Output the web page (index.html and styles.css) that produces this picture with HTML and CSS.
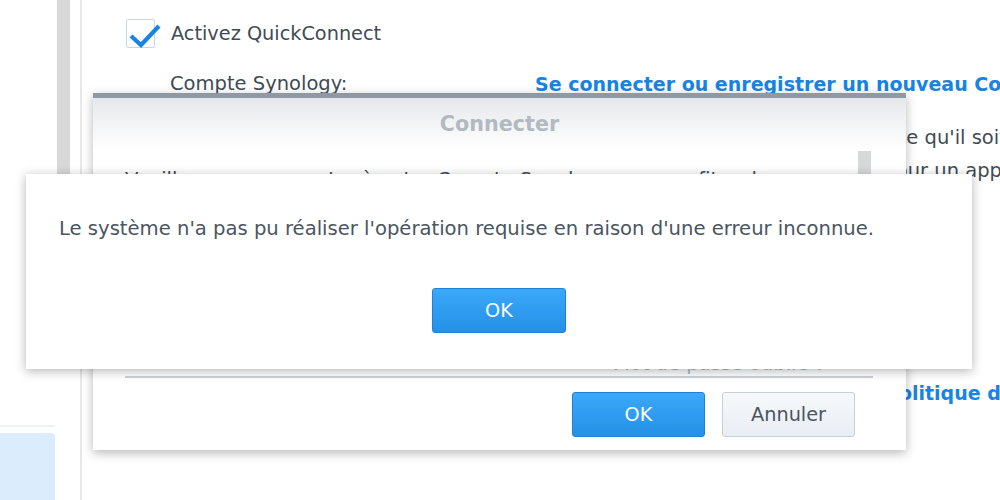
FILE: index.html
```html
<!DOCTYPE html>
<html lang="fr">
<head>
<meta charset="utf-8">
<title>QuickConnect</title>
<link rel="stylesheet" href="styles.css">
</head>
<body>
<div class="app">
  <aside class="sidebar">
    <div class="sb-space"></div>
    <div class="sb-sep"></div>
    <div class="sb-item"></div>
  </aside>
  <div class="track"><div class="thumb"></div></div>
  <div class="divider"></div>
  <main class="main">
    <div class="check-row">
      <span class="checkbox">
        <svg class="check" viewBox="0 0 32 26" width="32" height="26"><path d="M2 12 L12 21 L30 2" fill="none" stroke="#1a84e4" stroke-width="4.2" stroke-linejoin="miter"/></svg>
      </span>
      <span class="check-label">Activez QuickConnect</span>
    </div>
    <div class="field-row">
      <span class="field-label">Compte Synology:</span>
      <div class="field-value">
        <a class="link">Se connecter ou enregistrer un nouveau Compte Synology</a>
        <p class="desc first">Configurez votre Synology NAS de sorte qu'il soit</p>
        <p class="desc">accessible à distance, par exemple pour un appareil mobile.</p>
        <p class="policy"><a class="link">Conditions d'utilisation du site et Politique de confidentialité</a></p>
      </div>
    </div>
  </main>
</div>

<div class="dlg connect">
  <div class="dlg-head">Connecter</div>
  <div class="dlg-body">
    <div class="pane">
      <p class="pane-text">Veuillez vous connecter à votre Compte Synology pour profiter de QuickConnect.</p>
      <div class="pane-scroll"></div>
      <p class="pane-link">Mot de passe oublié ?</p>
    </div>
  </div>
  <div class="dlg-foot">
    <button class="btn btn-primary">OK</button>
    <button class="btn btn-default">Annuler</button>
  </div>
</div>

<div class="dlg alert">
  <p class="alert-msg">Le système n'a pas pu réaliser l'opération requise en raison d'une erreur inconnue.</p>
  <div class="alert-foot">
    <button class="btn btn-primary">OK</button>
  </div>
</div>
</body>
</html>
```
FILE: styles.css
```css
* { box-sizing: border-box; }
html, body { margin: 0; padding: 0; }
body {
  width: 1000px;
  height: 500px;
  overflow: hidden;
  background: #fff;
  font-family: "DejaVu Sans", Verdana, sans-serif;
  color: #414b55;
  position: relative;
}
.app {
  display: flex;
  height: 500px;
}
.sidebar {
  width: 55px;
  display: flex;
  flex-direction: column;
  flex: none;
}
.sb-space { height: 425px; }
.sb-sep { height: 2px; background: #edf2f7; }
.sb-item {
  margin-top: 6px;
  flex: 1;
  background: #dbedfc;
  border-top-right-radius: 4px;
}
.track {
  width: 13px;
  margin-left: 2px;
  flex: none;
}
.thumb {
  height: 330px;
  background: #d8d8d8;
}
.divider {
  width: 2px;
  margin-left: 10px;
  background: #e8e8e8;
  flex: none;
}
.main {
  flex: 1;
  padding: 19px 0 0 44px;
  overflow: hidden;
}
.check-row {
  display: flex;
  align-items: center;
  height: 29px;
}
.checkbox {
  position: relative;
  width: 29px;
  height: 29px;
  border: 1px solid #c9d6e3;
  border-radius: 2px;
  flex: none;
}
.check {
  position: absolute;
  left: 2px;
  top: 4px;
}
.check-label {
  margin-left: 16px;
  font-size: 19.3px;
  white-space: nowrap;
}
.field-row {
  display: flex;
  margin-top: 24px;
  margin-left: 44px;
}
.field-label {
  width: 365px;
  flex: none;
  font-size: 19.5px;
  line-height: 24px;
}
.field-value {
  white-space: nowrap;
}
.link {
  color: #1684e4;
  font-weight: bold;
  font-size: 19px;
  line-height: 24px;
}
.desc {
  margin: 0;
  font-size: 19.5px;
  line-height: 33px;
}
.desc.first {
  margin-top: 24.5px;
  text-indent: -7px;
}
.policy {
  margin: 194.5px 0 0;
  line-height: 24px;
  text-indent: -14px;
}

.dlg {
  position: absolute;
  background: #fff;
}
.connect {
  left: 93px;
  top: 93px;
  width: 813px;
  height: 357px;
  border-top: 5px solid #8e99a4;
  box-shadow: 0 3px 10px rgba(0, 0, 0, 0.28);
  display: flex;
  flex-direction: column;
}
.dlg-head {
  height: 52px;
  flex: none;
  background: linear-gradient(#e5e8ec, #ffffff);
  text-align: center;
  font-weight: bold;
  font-size: 20.7px;
  line-height: 52px;
  color: #b2b9c1;
}
.dlg-body {
  flex: 1;
  padding: 0 33px 0 32px;
}
.pane {
  position: relative;
  height: 228px;
  border-bottom: 2px solid #cdd0d4;
  overflow: hidden;
}
.pane-text {
  margin: 16px 0 0;
  width: 700px;
  font-size: 19.5px;
  line-height: 28px;
}
.pane-scroll {
  position: absolute;
  right: 2px;
  top: 1px;
  width: 13px;
  height: 60px;
  background: #d6d8da;
}
.pane-link {
  position: absolute;
  left: 488px;
  bottom: 1px;
  margin: 0;
  font-size: 19.5px;
  color: #a9bccf;
}
.dlg-foot {
  display: flex;
  justify-content: flex-end;
  gap: 17px;
  padding: 14px 51px 13px 0;
}
.btn {
  width: 133px;
  height: 45px;
  border-radius: 3px;
  font-family: "DejaVu Sans", Verdana, sans-serif;
  font-size: 19.3px;
  padding: 0;
}
.btn-primary {
  background: linear-gradient(#3ba8f9, #2490e8);
  border: 1px solid #1f82d6;
  color: #fff;
}
.btn-default {
  background: linear-gradient(#f6f8fb, #e9eef4);
  border: 1px solid #c6d0da;
  color: #4a5561;
}
.alert {
  left: 26px;
  top: 174px;
  width: 946px;
  height: 195px;
  box-shadow: 0 2px 10px rgba(0, 0, 0, 0.3);
  padding: 43px 33px 0;
}
.alert .btn { width: 134px; }
.alert-msg {
  margin: 0;
  font-size: 19.6px;
  line-height: 24px;
  color: #4a5561;
  white-space: nowrap;
}
.alert-foot {
  display: flex;
  justify-content: center;
  margin-top: 47px;
}
```
